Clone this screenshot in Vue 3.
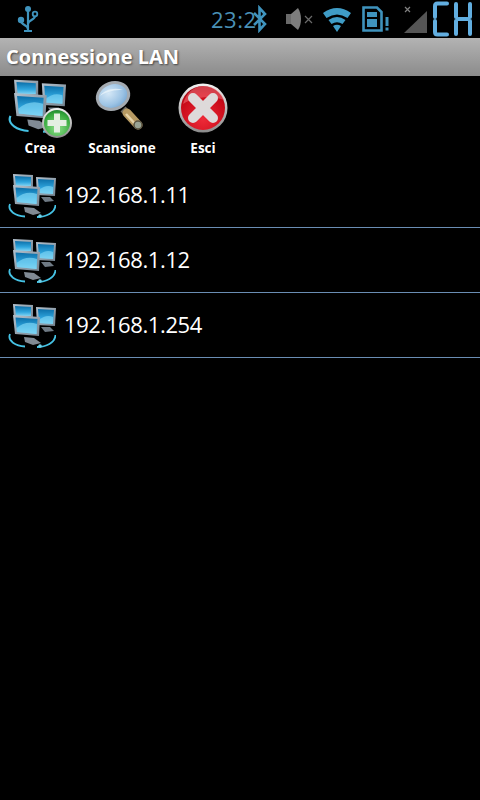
<template>
  <div class="screen">
    <svg class="defs" width="0" height="0">
      <defs>
        <linearGradient id="scr" x1="0" y1="0" x2="0" y2="1">
          <stop offset="0" stop-color="#0b6ea8" />
          <stop offset="0.6" stop-color="#2fa6de" />
          <stop offset="1" stop-color="#7fd4f4" />
        </linearGradient>
        <linearGradient id="frame" x1="0" y1="0" x2="1" y2="1">
          <stop offset="0" stop-color="#b4c2ce" />
          <stop offset="1" stop-color="#75838f" />
        </linearGradient>
        <radialGradient id="lens" cx="0.4" cy="0.35" r="0.75">
          <stop offset="0" stop-color="#d4e7f6" />
          <stop offset="0.6" stop-color="#9cc3e4" />
          <stop offset="1" stop-color="#6a9ecd" />
        </radialGradient>
        <radialGradient id="red" cx="0.5" cy="0.75" r="0.8">
          <stop offset="0" stop-color="#ee2a38" />
          <stop offset="0.7" stop-color="#c80a18" />
          <stop offset="1" stop-color="#8f0410" />
        </radialGradient>
        <linearGradient id="ring" x1="0" y1="0" x2="0" y2="1">
          <stop offset="0" stop-color="#f2f2f2" />
          <stop offset="1" stop-color="#8b8b8b" />
        </linearGradient>
        <radialGradient id="green" cx="0.5" cy="0.7" r="0.8">
          <stop offset="0" stop-color="#8fe08a" />
          <stop offset="0.7" stop-color="#35a83c" />
          <stop offset="1" stop-color="#14722a" />
        </radialGradient>
        <symbol id="net" viewBox="0 0 48 48">
          <path d="M2 33C-1 40 8 45 17 45.500M29 46C38 46 47 42 47.500 34" fill="none" stroke="#45c2e4" stroke-width="1.800" />
          <circle cx="32" cy="45" r="1.800" fill="#6fd0e8" />
          <g>
            <path d="M5 3 25 4 25 17 6 17z" fill="url(#frame)" />
            <path d="M7 5 23 6 23 15 8 15z" fill="url(#scr)" />
          </g>
          <g>
            <path d="M28 6 48 7 47 25 29 24z" fill="url(#frame)" />
            <path d="M30 8 46 9 45 23 31 22z" fill="url(#scr)" />
            <path d="M31 19Q38 13 45 16L45 23 31 22z" fill="#7ad2f2" opacity="0.7" />
            <path d="M33 26 42 26 46 30 37 31z" fill="#6f7a84" />
          </g>
          <g>
            <path d="M5 14 32 16 31 35 7 33z" fill="url(#frame)" />
            <path d="M7.500 16.500 29.500 18 28.500 33 9 31z" fill="url(#scr)" />
            <path d="M8.500 27Q18 19 29 23L28.500 33 9 31z" fill="#7dd4f4" opacity="0.7" />
            <path d="M16 36 26 37 33 42 25 44 17 41z" fill="#808a94" />
          </g>
        </symbol>
      </defs>
    </svg>

    <div class="status-bar">
      <svg class="usb" width="24" height="30" viewBox="0 0 24 30">
        <g fill="none" stroke="#3f93bd" stroke-width="2.200">
          <path d="M12 4V27M8 27h8" />
          <path d="M5 17c0 4 7 4 7 8" />
          <path d="M19 12c0 4-7 4-7 8" />
        </g>
        <circle cx="12" cy="5" r="3" fill="#3f93bd" />
        <circle cx="5" cy="16" r="3.200" fill="#3f93bd" />
        <circle cx="19" cy="10" r="2.300" fill="none" stroke="#3f93bd" stroke-width="1.800" />
      </svg>
      <span class="clock">23:2</span>
      <svg class="bt" width="16" height="28" viewBox="0 0 16 28">
        <path d="M2 8 13 19 7.500 25V3L13 9 2 20" fill="none" stroke="#3f93bd" stroke-width="2.600" />
      </svg>
      <svg class="mute" width="30" height="26" viewBox="0 0 30 26">
        <path d="M1 8h5v10H1z" fill="#6a6a6a" />
        <path d="M6 8l7-6c2 3 3 7 3 11s-1 8-3 11l-7-6z" fill="#7d7d7d" />
        <path d="M20 10l7 7M27 10l-7 7" stroke="#6a6a6a" stroke-width="1.200" />
      </svg>
      <svg class="wifi" width="30" height="26" viewBox="0 0 30 26">
        <g fill="#3f9cc6">
          <path d="M1 7Q15 -3 29 7L25.500 12Q15 5 4.500 12z" />
          <path d="M6.500 14Q15 8 23.500 14L20.500 18Q15 14.500 9.500 18z" />
          <path d="M11 20Q15 17.500 19 20L15 26z" />
        </g>
      </svg>
      <svg class="sim" width="28" height="26" viewBox="0 0 28 26">
        <path d="M1.500 1.500H15L19.500 6V24.500H1.500z" fill="none" stroke="#3f93bd" stroke-width="2.600" />
        <path d="M5 6h10v5H5zM5 13h10v8H5z" fill="#3f93bd" />
        <path d="M23.500 11h3v9h-3zM23.500 21.500h3v3h-3z" fill="#3f93bd" />
      </svg>
      <svg class="signal" width="24" height="30" viewBox="0 0 24 30">
        <path d="M2 3l5 5M7 3l-5 5" stroke="#808080" stroke-width="1.200" />
        <path d="M24 7V29H1z" fill="#555" />
      </svg>
      <span class="carrier">
        <svg width="42" height="36" viewBox="0 0 42 36" fill="none" stroke="#62aee0" stroke-width="4" stroke-linecap="round">
          <path d="M15 2.500H5.500Q3 2.500 3 5V16M3 20V31Q3 33.500 5.500 33.500H15" />
          <path d="M24 3V16M24 20V33M38 3V16M38 20V33M26.500 18H35.500" />
        </svg>
      </span>
    </div>

    <div class="title-bar">Connessione LAN</div>

    <div class="toolbar">
      <div class="tool tool-crea">
        <div class="tool-icon">
          <svg width="64" height="64" viewBox="0 0 64 64">
            <use href="#net" x="0" y="0" width="58" height="58" />
            <circle cx="49" cy="47" r="15" fill="url(#ring)" />
            <circle cx="49" cy="47" r="13" fill="url(#green)" />
            <path d="M46 37.500h6V44h6.500v6H52v6.500h-6V50h-6.500v-6H46z" fill="#e4efe2" />
          </svg>
        </div>
        <span>Crea</span>
      </div>
      <div class="tool tool-scan">
        <div class="tool-icon">
          <svg width="64" height="64" viewBox="0 0 64 64">
            <path d="M33 33 L38 38" stroke="#6d6a62" stroke-width="7" />
            <path d="M37 37 L48 49" stroke="#b79a63" stroke-width="9" stroke-linecap="round" />
            <path d="M36 38 L47 50" stroke="#e6d3a8" stroke-width="2.500" />
            <circle cx="48" cy="49" r="4" fill="#9aa495" stroke="#5a5340" stroke-width="1.500" />
            <ellipse cx="23" cy="20" rx="16" ry="13" transform="rotate(-20 23 20)" fill="url(#lens)" stroke="#a4aab0" stroke-width="3" />
            <path d="M10 20c4-6 14-9 23-6-8 0-16 1-23 6z" fill="#eef6fb" opacity="0.7" />
          </svg>
        </div>
        <span>Scansione</span>
      </div>
      <div class="tool tool-esci">
        <div class="tool-icon">
          <svg width="64" height="64" viewBox="0 0 64 64">
            <circle cx="32" cy="32" r="24.500" fill="url(#ring)" />
            <circle cx="32" cy="32" r="22" fill="url(#red)" />
            <path d="M12 28C16 14 26 10 33 10c10 0 18 7 20 14-12-4-28-4-41 4z" fill="#f56f78" opacity="0.55" />
            <path d="M22 22 42 42M42 22 22 42" stroke="#dedada" stroke-width="10" stroke-linecap="round" />
          </svg>
        </div>
        <span>Esci</span>
      </div>
    </div>

    <ul class="hosts">
      <li v-for="ip in hosts" :key="ip" class="host">
        <svg class="host-icon" width="48" height="48"><use href="#net" width="48" height="48" /></svg>
        <span>{{ ip }}</span>
      </li>
    </ul>
  </div>
</template>

<script setup>
const hosts = ['192.168.1.11', '192.168.1.12', '192.168.1.254']
</script>

<style>
html, body { background: #000; }
</style>

<style scoped>
.screen {
  width: 480px;
  height: 800px;
  background: #000;
  overflow: hidden;
  font-family: "Open Sans", "Noto Sans", sans-serif;
  color: #fff;
}
.defs { display: block; height: 0; }
.status-bar {
  height: 38px;
  display: flex;
  align-items: center;
  background: #000;
}
.usb { margin-left: 16px; }
.clock {
  margin-left: 171px;
  width: 46px;
  font-size: 22px;
  letter-spacing: 0.5px;
  color: #4a90b6;
}
.bt { margin-left: -5px; }
.mute { margin-left: 17px; }
.wifi { margin-left: 7px; }
.sim { margin-left: 10px; }
.signal { margin-left: 13px; }
.carrier { margin-left: 5px; height: 36px; }
.title-bar {
  height: 38px;
  line-height: 38px;
  padding-left: 6px;
  font-size: 20px;
  font-weight: 700;
  color: #fff;
  text-shadow: 1px 1px 2px #444;
  background: linear-gradient(#b3b3b3, #8b8b8b);
}
.toolbar {
  display: flex;
  height: 87px;
  font-size: 13.5px;
  font-weight: 700;
}
.tool {
  display: flex;
  flex-direction: column;
  align-items: center;
}
.tool-icon { height: 63px; }
.tool-icon svg { display: block; }
.tool-crea { width: 64px; margin-left: 8px; }
.tool-scan { width: 84px; margin-left: 8px; }
.tool-esci { width: 64px; margin-left: 7px; }
.tool span { line-height: 18px; white-space: nowrap; }
.hosts {
  list-style: none;
  margin: 0;
  padding: 0;
}
.host {
  height: 64px;
  display: flex;
  align-items: center;
  border-bottom: 1px solid #6a8db3;
  font-size: 22px;
  letter-spacing: -0.4px;
  color: #fff;
}
.host span { padding-bottom: 2px; }
.host-icon { margin-left: 8px; margin-right: 8px; }
</style>
